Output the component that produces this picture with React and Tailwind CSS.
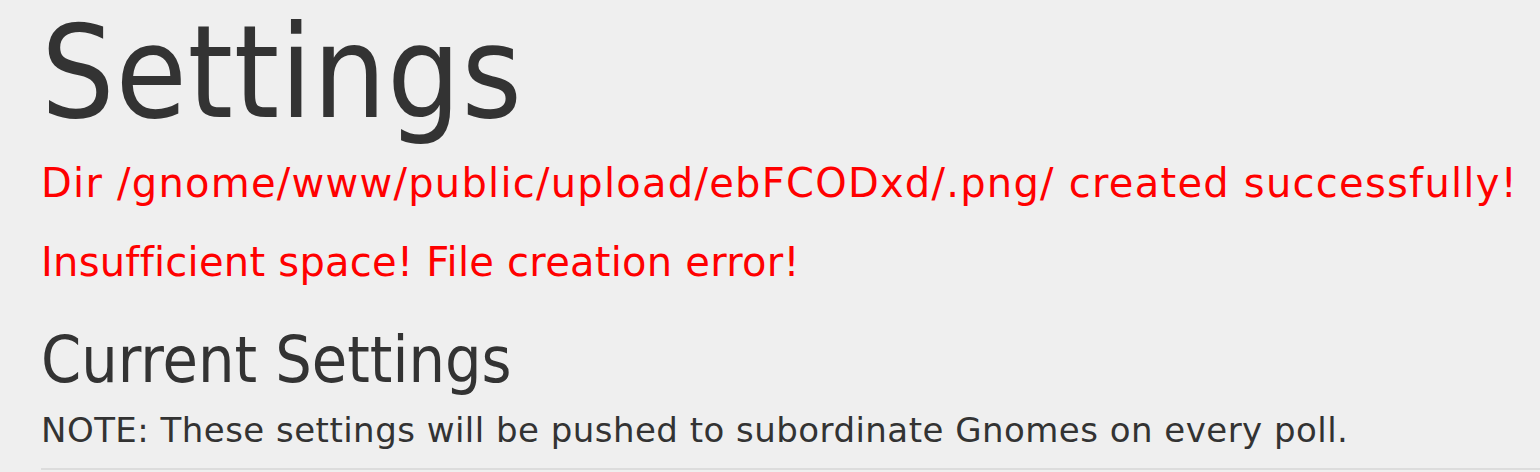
export default function App() {
  return (
    <div className="flex min-h-[472px] w-[1540px] flex-col bg-[#efefef] pl-[41px] text-[#333]" style={{ fontFamily: '"DejaVu Sans", sans-serif' }}>
      <h1 className="-my-[3px] text-[129px] leading-[150px] font-normal tracking-[0.7px]" style={{ fontFamily: '"DejaVu Sans Condensed", "DejaVu Sans", sans-serif' }}>Settings</h1>
      <p className="text-[40px] leading-[79px] text-[#ff0000] tracking-[1.25px] whitespace-nowrap">Dir /gnome/www/public/upload/ebFCODxd/.png/ created successfully!</p>
      <p className="text-[40px] leading-[79px] text-[#ff0000] tracking-[0.25px] whitespace-nowrap">Insufficient space! File creation error!</p>
      <h2 className="mt-[18px] text-[64px] leading-[80px] font-normal" style={{ fontFamily: '"DejaVu Sans Condensed", "DejaVu Sans", sans-serif' }}>Current Settings</h2>
      <p className="mt-[5px] text-[34px] leading-[50px] tracking-[0.47px] whitespace-nowrap">NOTE: These settings will be pushed to subordinate Gnomes on every poll.</p>
      <hr className="mt-[13px] border-0 border-t-2 border-[#dcdcdc]" />
    </div>
  );
}
